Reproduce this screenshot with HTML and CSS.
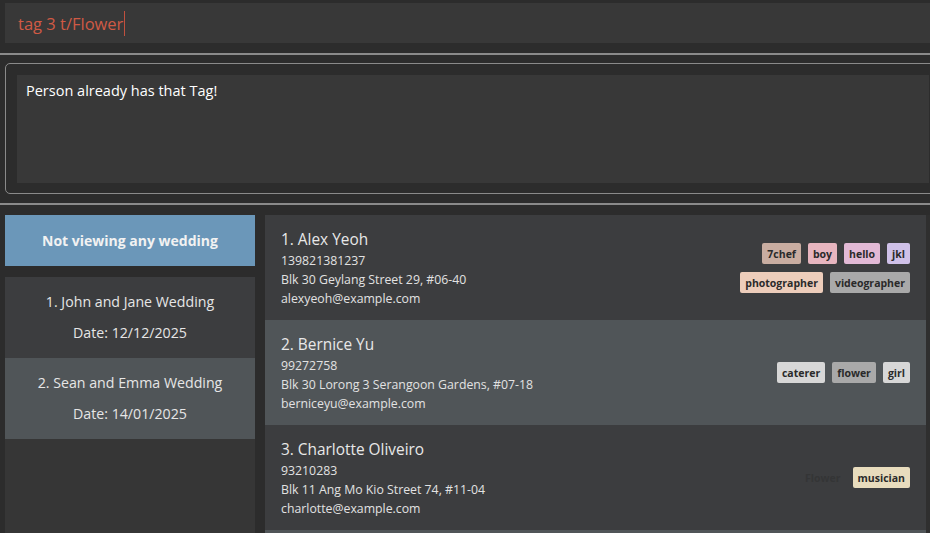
FILE: index.html
```html
<!DOCTYPE html>
<html>
<head>
<meta charset="utf-8">
<link rel="stylesheet" href="styles.css">
</head>
<body>
<div class="command">
  <div class="command-box"><span class="command-text">tag 3 t/Flower</span><span class="caret"></span></div>
</div>
<div class="sep"></div>
<div class="result">
  <div class="result-inner">Person already has that Tag!</div>
</div>
<div class="sep sep-2"></div>
<div class="main">
  <div class="left">
    <div class="viewing">Not viewing any wedding</div>
    <div class="weddings">
      <div class="wedding">
        <div>1. John and Jane Wedding</div>
        <div>Date: 12/12/2025</div>
      </div>
      <div class="wedding alt">
        <div>2. Sean and Emma Wedding</div>
        <div>Date: 14/01/2025</div>
      </div>
    </div>
  </div>
  <div class="persons">
    <div class="card">
      <div class="info">
        <div class="name">1. Alex Yeoh</div>
        <div class="line">139821381237</div>
        <div class="line">Blk 30 Geylang Street 29, #06-40</div>
        <div class="line">alexyeoh@example.com</div>
      </div>
      <div class="tags">
        <span class="tag t-chef">7chef</span>
        <span class="tag t-boy">boy</span>
        <span class="tag t-hello">hello</span>
        <span class="tag t-jkl">jkl</span>
        <span class="tag t-photo">photographer</span>
        <span class="tag t-video">videographer</span>
      </div>
    </div>
    <div class="card alt">
      <div class="info">
        <div class="name">2. Bernice Yu</div>
        <div class="line">99272758</div>
        <div class="line">Blk 30 Lorong 3 Serangoon Gardens, #07-18</div>
        <div class="line">berniceyu@example.com</div>
      </div>
      <div class="tags">
        <span class="tag t-light">caterer</span>
        <span class="tag t-video">flower</span>
        <span class="tag t-light">girl</span>
      </div>
    </div>
    <div class="card">
      <div class="info">
        <div class="name">3. Charlotte Oliveiro</div>
        <div class="line">93210283</div>
        <div class="line">Blk 11 Ang Mo Kio Street 74, #11-04</div>
        <div class="line">charlotte@example.com</div>
      </div>
      <div class="tags">
        <span class="tag t-ghost">Flower</span>
        <span class="tag t-music">musician</span>
      </div>
    </div>
    <div class="card alt"></div>
  </div>
  <div class="scroll"></div>
</div>
</body>
</html>
```

FILE: styles.css
```css
html, body {
  margin: 0;
  padding: 0;
  height: 100%;
  overflow: hidden;
}
body {
  background: #2c2c2c;
  font-family: "Open Sans", "Noto Sans", sans-serif;
  color: #e6e6e6;
}
.command {
  padding: 3px 0 0 5px;
}
.command-box {
  height: 40px;
  background: #383838;
  display: flex;
  align-items: center;
  padding-left: 13px;
}
.command-text {
  font-size: 16.5px;
  color: #d05a45;
}
.caret {
  display: inline-block;
  width: 1px;
  height: 25px;
  background: #c0503e;
  margin-left: 1px;
}
.sep {
  margin-top: 10px;
  height: 2px;
  background: #8a8a8a;
}
.sep-2 {
  margin-top: 9px;
}
.result {
  margin: 8px -12px 0 5px;
  padding: 11px 12px 10px 11px;
  border: 1px solid #8a8a8a;
  border-radius: 5px;
}
.result-inner {
  height: 108px;
  box-sizing: border-box;
  background: #383838;
  padding: 6px 9px;
  font-size: 14.5px;
  color: #ffffff;
}
.main {
  margin-top: 10px;
  display: flex;
  padding-left: 5px;
  height: 318px;
}
.left {
  width: 250px;
  display: flex;
  flex-direction: column;
}
.viewing {
  height: 51px;
  background: #6b97b9;
  color: #f2f2f2;
  font-weight: 700;
  font-size: 14px;
  display: flex;
  align-items: center;
  justify-content: center;
}
.weddings {
  margin-top: 11px;
  flex: 1;
  background: #363636;
}
.wedding {
  height: 81px;
  background: #3c3d3f;
  display: flex;
  flex-direction: column;
  align-items: center;
  justify-content: center;
  gap: 12px;
  font-size: 14.2px;
  color: #e6e6e6;
  line-height: 19px;
  padding-bottom: 1px;
  box-sizing: border-box;
}
.wedding.alt {
  background: #505558;
}
.persons {
  margin-left: 10px;
  flex: 1;
  display: flex;
  flex-direction: column;
  overflow: hidden;
}
.scroll {
  width: 4px;
  background: #2f2f2f;
}
.card {
  flex: 0 0 105px;
  box-sizing: border-box;
  background: #3c3d3f;
  display: flex;
  align-items: center;
  justify-content: space-between;
  padding: 0 16px;
}
.card.alt {
  background: #505558;
}
.info {
  align-self: flex-start;
  padding-top: 14px;
}
.name {
  font-size: 15.4px;
  line-height: 22px;
  color: #e8e8e8;
}
.line {
  font-size: 12.3px;
  line-height: 19px;
  color: #e2e2e2;
}
.tags {
  width: 200px;
  display: flex;
  flex-wrap: wrap;
  justify-content: flex-end;
  gap: 8px 7px;
}
.tag {
  font-size: 10.5px;
  font-weight: 700;
  line-height: 16px;
  padding: 3px 5px 2px;
  border-radius: 2px;
  color: #2a2a2a;
}
.t-chef { background: #c9ada1; }
.t-boy { background: #e7b5bf; }
.t-hello { background: #e2b9d5; }
.t-jkl { background: #cfc1e8; }
.t-photo { background: #edcdbb; }
.t-video { background: #a9a9a9; }
.t-light { background: #d7d7d7; }
.t-music { background: #e8dcbd; }
.t-ghost { background: transparent; color: #343536; }
```
